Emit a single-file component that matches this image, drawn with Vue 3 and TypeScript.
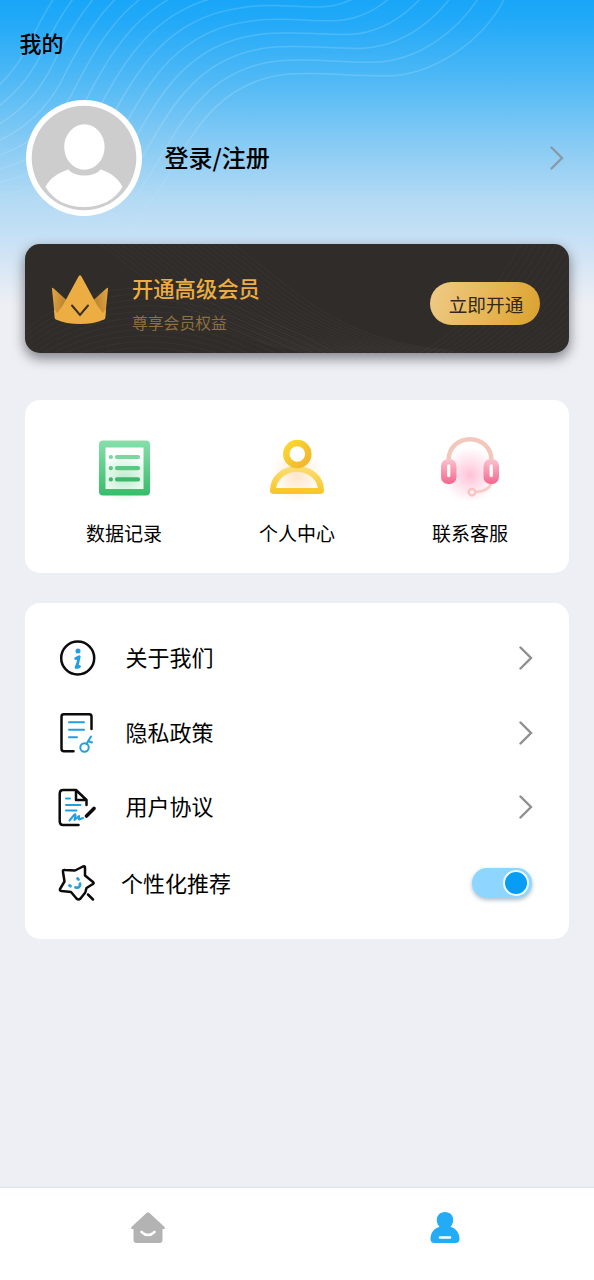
<script setup lang="ts">
import { ref } from 'vue'

type Point = [number, number]

const lowCurve: Point[] = [[504, 0], [480, 45], [430, 76], [385, 76], [345, 76], [320, 72], [290, 74], [215, 80], [190, 140], [165, 180], [150, 205], [138, 220], [120, 240]]
const highCurve: Point[] = [[410, -67], [386, -22], [360, 7], [318, 7], [290, 7], [270, 3], [240, 8], [165, 18], [135, 75], [110, 120], [90, 160], [60, 185], [0, 195]]

const heroWaves = Array.from({ length: 13 }, (_, i) => {
  const t = i / 5
  const p = lowCurve.map(([x, y], k) => {
    const [hx, hy] = highCurve[k]
    return `${(x + (hx - x) * t).toFixed(1)} ${(y + (hy - y) * t).toFixed(1)}`
  })
  return `M${p[0]} C${p.slice(1).join(' ')}`
})

const fallingWaves = Array.from({ length: 20 }, (_, i) => {
  const x = 72 + i * 7
  return `M${x} -2 C${x + 50} 34 ${x + 75} 62 ${x + 125} 84 S${x + 190 + i} 102 ${x + 225 + i} 112`
})
const arcWaves = Array.from({ length: 11 }, (_, i) => {
  const y = 134 - i * 6
  return `M0 ${y + 12} C50 ${y - 28} 125 ${y - 48} 215 ${y - 10} S290 ${y + 26} 325 ${y + 42}`
})
const risingWaves = Array.from({ length: 22 }, (_, i) => {
  const x = 394 + i * 7
  return `M${x} 110 Q${x + 60} 76 ${x + 104} -3`
})

const shortcuts = [
  { id: 'records', label: '数据记录' },
  { id: 'profile', label: '个人中心' },
  { id: 'support', label: '联系客服' },
]
const links = [
  { id: 'about', label: '关于我们' },
  { id: 'privacy', label: '隐私政策' },
  { id: 'terms', label: '用户协议' },
]
const personalized = ref(true)
</script>

<template>
  <div class="page">
    <svg class="waves" viewBox="0 0 594 290" fill="none">
      <defs>
        <linearGradient id="fade" x1="0" y1="0" x2="0" y2="240" gradientUnits="userSpaceOnUse">
          <stop stop-color="#fff" stop-opacity=".15" />
          <stop offset=".5" stop-color="#fff" stop-opacity=".15" />
          <stop offset="1" stop-color="#fff" stop-opacity="0" />
        </linearGradient>
      </defs>
      <path v-for="(d, i) in heroWaves" :key="i" :d="d" stroke="url(#fade)" stroke-width="1.5" />
    </svg>

    <h1 class="title">我的</h1>

    <section class="account">
      <svg class="avatar" viewBox="0 0 116 116">
        <circle cx="58" cy="58" r="58" fill="#fff" />
        <circle cx="58" cy="58" r="52.3" fill="#cdcdcd" />
        <ellipse cx="58.4" cy="47" rx="20.2" ry="22.8" fill="#fff" />
        <path d="M42.5 69.5C49 77.5 68 77.5 74.5 69.5C84 72 93 79 96.5 87C89 100 75 107 58 107S27 100 19.500 87C23 79 33 72 42.500 69.500Z" fill="#fff" />
      </svg>
      <span class="login">登录/注册</span>
      <svg class="chevron" viewBox="0 0 14 24"><path d="M1.500 1.500 12 12 1.500 22.500" /></svg>
    </section>

    <section class="member">
      <svg class="member-waves" viewBox="0 0 544 109" fill="none">
        <path v-for="(d, i) in fallingWaves" :key="'f' + i" :d="d" />
        <path v-for="(d, i) in arcWaves" :key="'a' + i" :d="d" />
        <path v-for="(d, i) in risingWaves" :key="'r' + i" :d="d" />
      </svg>
      <svg class="crown" viewBox="0 0 56 50">
        <defs>
          <linearGradient id="crown-left" x1="0" y1="0.2" x2="1" y2="0.5"><stop stop-color="#dfa342" /><stop offset="1" stop-color="#ac7529" /></linearGradient>
          <linearGradient id="crown-right" x1="1" y1="0.2" x2="0" y2="0.5"><stop stop-color="#dfa342" /><stop offset="1" stop-color="#ac7529" /></linearGradient>
        </defs>
        <path d="M0 14Q0 12 1.700 13.500L20 30 12 46 3 44Z" fill="url(#crown-left)" />
        <path d="M56 14Q56 12 54.300 13.500L36 30 44 46 53 44Z" fill="url(#crown-right)" />
        <path d="M26.500 1.500Q28 -1 29.500 1.500L45.500 31 51 38 54 34 53.200 43Q53 44 52 44.500Q42 49 28 49T4 44.500Q3 44 2.800 43L2 34 5 38 10.500 31Z" fill="#ecad42" />
        <path d="M20 30.500 28 40 36 30.500" fill="none" stroke="#3d3023" stroke-width="2" stroke-linecap="round" />
      </svg>
      <div class="member-copy">
        <h2>开通高级会员</h2>
        <p>尊享会员权益</p>
      </div>
      <button class="join">立即开通</button>
    </section>

    <section class="shortcuts">
      <div v-for="item in shortcuts" :key="item.id" class="shortcut">
        <svg v-if="item.id === 'records'" class="shortcut-icon" viewBox="0 0 76 76">
          <defs>
            <linearGradient id="green" x1="0" y1="0" x2="0" y2="1"><stop stop-color="#87dfaa" /><stop offset="1" stop-color="#36bd69" /></linearGradient>
            <radialGradient id="green-glow"><stop stop-color="#5dcf88" stop-opacity=".4" /><stop offset="1" stop-color="#5dcf88" stop-opacity="0" /></radialGradient>
          </defs>
          <ellipse cx="38.500" cy="48" rx="30" ry="25" fill="url(#green-glow)" />
          <path fill-rule="evenodd" fill="url(#green)" d="M17 10.500H60Q64 10.500 64 14.500V61.500Q64 65.500 60 65.500H17Q13 65.500 13 61.500V14.500Q13 10.500 17 10.500ZM19.500 17.500V59H57.500V17.500Z" />
          <g stroke-width="4.200" stroke-linecap="round">
            <path d="M24.800 27h.1M31 27H52" stroke="#7cd6a0" />
            <path d="M24.800 38.200h.1M31 38.200H52" stroke="#58c982" />
            <path d="M24.800 49.400h.1M31 49.400H52" stroke="#3fb66c" />
          </g>
        </svg>
        <svg v-else-if="item.id === 'profile'" class="shortcut-icon" viewBox="0 0 76 76" fill="none">
          <defs>
            <linearGradient id="gold" x1="0" y1="0" x2="1" y2="1"><stop stop-color="#fbd832" /><stop offset="1" stop-color="#f2b42d" /></linearGradient>
            <linearGradient id="gold-body" x1="0" y1="0" x2="0" y2="1"><stop stop-color="#fbdc70" /><stop offset="1" stop-color="#fac62b" /></linearGradient>
            <radialGradient id="gold-glow"><stop stop-color="#ffad55" stop-opacity=".32" /><stop offset="1" stop-color="#ffc16c" stop-opacity="0" /></radialGradient>
          </defs>
          <circle cx="38" cy="46" r="28" fill="url(#gold-glow)" />
          <path d="M14 60.500C14 48 25 39 38 39S62 48 62 60.500Q62 61 61 61H15Q14 61 14 60.500Z" stroke="url(#gold-body)" stroke-width="6" stroke-linejoin="round" />
          <circle cx="38.300" cy="24" r="11" fill="#fff" stroke="url(#gold)" stroke-width="6.500" />
        </svg>
        <svg v-else class="shortcut-icon" viewBox="0 0 76 76" fill="none">
          <defs>
            <linearGradient id="pink" x1="0" y1="0" x2="0" y2="1"><stop stop-color="#fac3cf" /><stop offset="1" stop-color="#f5668e" /></linearGradient>
            <radialGradient id="pink-glow"><stop stop-color="#ff82ae" stop-opacity=".5" /><stop offset="1" stop-color="#ff94b9" stop-opacity="0" /></radialGradient>
          </defs>
          <circle cx="38" cy="45" r="28" fill="url(#pink-glow)" />
          <path d="M16.500 32V31C16.500 2 59.500 2 59.500 31V32" stroke="#f4c7bd" stroke-width="4.500" />
          <path d="M59.500 53Q56 62 43 61.800" stroke="#f5cbc4" stroke-width="2.700" />
          <circle cx="40" cy="62.200" r="3.300" stroke="#f5c5bf" stroke-width="2.300" />
          <rect x="9" y="29" width="15.500" height="25" rx="7" fill="url(#pink)" />
          <rect x="51.500" y="29" width="15.500" height="25" rx="7" fill="url(#pink)" />
          <path d="M16.700 36V45.500M59.200 36V45.500" stroke="#fff" stroke-width="3.300" stroke-linecap="round" />
        </svg>
        <span>{{ item.label }}</span>
      </div>
    </section>

    <section class="settings">
      <div v-for="item in links" :key="item.id" class="row" :class="item.id">
        <svg v-if="item.id === 'about'" class="row-icon" viewBox="0 0 44 44">
          <circle cx="22.700" cy="22" r="16.500" class="ink" />
          <circle cx="23" cy="15" r="2.500" fill="#229fe4" />
          <path d="M20.700 22.500 24.200 20.700 22 30.500Q22.200 32 24.500 30.500M21 31.500 23.200 26" class="blue thick" />
        </svg>
        <svg v-else-if="item.id === 'privacy'" class="row-icon" viewBox="0 0 44 44">
          <path d="M18.500 40.300H9Q6.500 40.300 6.500 37.800V5.500Q6.500 3.300 9 3.300H34Q36.500 3.300 36.500 5.500V18" class="ink" />
          <path d="M14 11.200H29M14 18.700H29M14 26.200H22" class="blue" />
          <circle cx="29.500" cy="36.500" r="4.200" class="blue" />
          <path d="M31.500 33 36 25.500M33 30 37 31.500" class="blue" />
        </svg>
        <svg v-else class="row-icon" viewBox="0 0 44 44">
          <path d="M23.500 40H8Q4.700 40 4.700 36V9Q4.700 5 8 5H21L31.500 15V20M21 5V15H31.500Z" class="ink" />
          <path d="M11 13.500H15M11 20H25.500M11 25.500H21.500M14.500 35.500 19.500 29.500Q21 28.500 20.300 31.500L19.500 35 24 31 24 34.500 28 33" class="blue" />
          <path d="M31.500 31 39 23.500" class="pen" />
        </svg>
        <span>{{ item.label }}</span>
        <svg class="chevron" viewBox="0 0 14 24"><path d="M1.500 1.500 12 12 1.500 22.500" /></svg>
      </div>
      <div class="row personal">
        <svg class="row-icon" viewBox="0 0 44 44">
          <path d="M28 5.500Q30.300 4.500 30 7L30 14.500 38 21Q39.500 22.300 37.500 23.300L31.500 27 30.300 31.500 25.500 37.500Q23.500 39.500 21.500 37.500L16 31 6.500 30Q4 29.500 5.300 27.500L9.500 20.500 8 11Q7.500 8.500 10 9L20 9.500Z" class="ink" />
          <path d="M33 33.500 38 38.500" class="ink" />
          <path d="M22.500 17.500 23.500 18.500M14.500 24.500 15.500 25.200M20.500 26.500Q25.500 27.500 25 22.700" class="blue thick" />
        </svg>
        <span>个性化推荐</span>
        <button class="switch" :class="{ on: personalized }" role="switch" :aria-checked="personalized" @click="personalized = !personalized"><i></i></button>
      </div>
    </section>

    <nav class="tabs">
      <div class="tab">
        <svg viewBox="0 0 40 40">
          <path d="M18.500 5Q20 3.500 21.500 5L36.500 19Q38 21 35.500 21H34.500V32Q34.500 35 31.500 35H8.500Q5.500 35 5.500 32V21H4.500Q2 21 3.500 19Z" fill="#b3b3b3" />
          <path d="M13.500 24Q20 30 26.500 24" fill="none" stroke="#fff" stroke-width="2.600" stroke-linecap="round" />
        </svg>
      </div>
      <div class="tab">
        <svg viewBox="0 0 40 40">
          <path d="M14.500 19C9.500 13 11.500 4 20 4S30.500 13 25.500 19C31 20 34.500 25 34.500 31Q34.500 35 30.500 35H9.500Q5.500 35 5.500 31C5.500 25 9 20 14.500 19Z" fill="#23abf5" />
          <path d="M15 29.500H25" stroke="#fff" stroke-width="2.400" stroke-linecap="round" />
        </svg>
      </div>
    </nav>
  </div>
</template>

<style>
body {
  background: #eeeff4;
}
</style>

<style scoped>
.page {
  position: relative;
  box-sizing: border-box;
  display: flex;
  flex-direction: column;
  height: 1280px;
  padding: 0 25px;
  overflow: hidden;
  color: #000;
  font-family: "Noto Sans CJK SC", sans-serif;
  background: linear-gradient(180deg, #19a6f8 0, #21a9f8 20px, #50b9f5 80px, #84caf4 140px, #b3daf4 200px, #c8e1f5 240px, #eeeff4 305px);
}
.waves {
  position: absolute;
  top: 0;
  left: 0;
  width: 594px;
  height: 290px;
}
.title {
  position: relative;
  margin: 26px 0 0 -5.500px;
  font-size: 22px;
  font-weight: 500;
  line-height: 32px;
}
.account {
  position: relative;
  display: flex;
  align-items: center;
  height: 116px;
  margin-top: 41.500px;
  padding: 0 5px 0 1px;
}
.avatar {
  width: 116px;
  height: 116px;
}
.login {
  flex: 1;
  margin: -2px 0 0 22.500px;
  font-size: 24px;
  font-weight: 500;
}
.chevron {
  width: 14px;
  height: 24px;
  fill: none;
  stroke: #8f8f8f;
  stroke-width: 2.400;
  stroke-linecap: round;
}
.account .chevron {
  stroke: #8a98a7;
}
.member {
  position: relative;
  box-sizing: border-box;
  display: flex;
  align-items: center;
  height: 109px;
  margin-top: 28.500px;
  padding: 0 29px 0 27px;
  border-radius: 15px;
  background: #302c29;
  box-shadow: 0 5px 12px 1px rgba(35, 35, 45, 0.500);
}
.member-waves {
  position: absolute;
  inset: 0;
  width: 100%;
  height: 100%;
  border-radius: 15px;
  stroke: #9c9286;
  stroke-opacity: 0.080;
  stroke-width: 1;
}
.crown {
  position: relative;
  width: 56px;
  height: 50px;
  margin-top: 2px;
}
.member-copy {
  position: relative;
  flex: 1;
  margin: 13px 0 0 24px;
}
.member-copy h2 {
  margin: 0;
  color: #ecad42;
  font-size: 21.300px;
  font-weight: 500;
  line-height: 34px;
}
.member-copy p {
  margin: 0;
  color: #8c703f;
  font-size: 15.800px;
  line-height: 35px;
}
.join {
  position: relative;
  width: 110px;
  height: 43px;
  margin-top: 10px;
  padding: 0 0 0 2px;
  border: 0;
  border-radius: 22px;
  color: #32281b;
  font: 18.700px/43px "Noto Sans CJK SC", sans-serif;
  background: linear-gradient(110deg, #efcb88, #e4b24b 65%, #d9a02e);
}
.shortcuts {
  box-sizing: border-box;
  display: grid;
  grid-template-columns: repeat(3, 173px);
  justify-content: center;
  height: 173px;
  margin-top: 47px;
  padding-top: 30px;
  border-radius: 15px;
  background: #fff;
}
.shortcut {
  display: flex;
  flex-direction: column;
  align-items: center;
  font-size: 19px;
  line-height: 28px;
}
.shortcut-icon {
  width: 76px;
  height: 76px;
  margin-bottom: 13px;
}
.settings {
  box-sizing: border-box;
  display: flex;
  flex-direction: column;
  height: 336px;
  margin-top: 30px;
  padding: 18px 36px 17px 31px;
  border-radius: 15px;
  background: #fff;
}
.row {
  display: flex;
  align-items: center;
  height: 75px;
  font-size: 22px;
}
.row span {
  flex: 1;
  margin: -4px 0 0 26.500px;
}
.row-icon {
  width: 44px;
  height: 44px;
  margin-left: -1px;
}
.terms {
  height: 74px;
}
.row.personal {
  height: 78px;
  padding-right: 1px;
}
.personal span {
  margin: -2px 0 0 22px;
}
.ink,
.blue,
.pen {
  fill: none;
  stroke: #0b0b0b;
  stroke-width: 2.500;
  stroke-linecap: round;
  stroke-linejoin: round;
}
.blue {
  stroke: #229fe0;
  stroke-width: 2;
}
.blue.thick {
  stroke-width: 2.800;
}
.pen {
  stroke-width: 3.600;
}
.switch {
  box-sizing: border-box;
  display: flex;
  align-items: center;
  width: 60px;
  height: 30px;
  padding: 0 3px;
  border: 0;
  border-radius: 15px;
  background: #d5d8dc;
  box-shadow: 0 2px 4px rgba(20, 60, 90, 0.350);
}
.switch.on {
  justify-content: flex-end;
  background: #8ed6ff;
}
.switch i {
  box-sizing: border-box;
  width: 26px;
  height: 26px;
  border: 2px solid #effbff;
  border-radius: 50%;
  background: #079df4;
}
.tabs {
  box-sizing: border-box;
  display: flex;
  height: 93px;
  margin: auto -25px 0;
  border-top: 1px solid #dfe1e8;
  background: #fff;
}
.tab {
  display: flex;
  flex: 1;
  justify-content: center;
  padding: 20px 1px 0 0;
}
.tab svg {
  width: 40px;
  height: 40px;
}
</style>
